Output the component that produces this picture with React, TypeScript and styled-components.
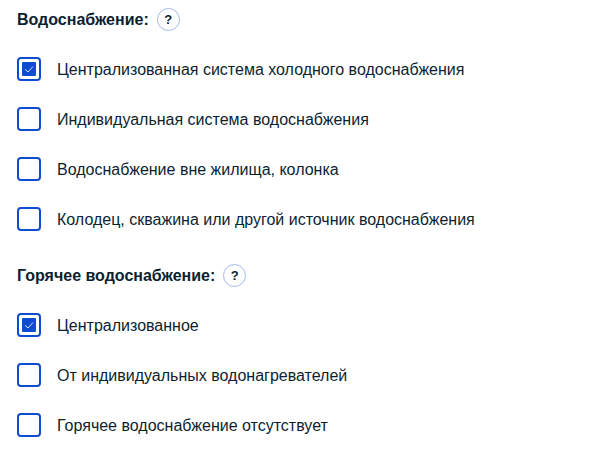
import React from "react";
import styled, { createGlobalStyle } from "styled-components";

const GlobalStyle = createGlobalStyle`
  * { box-sizing: border-box; }
  body {
    margin: 0;
    background: #fff;
    color: #0b1f33;
    font: 16px/24px "Liberation Sans", Arial, sans-serif;
  }
`;

const Form = styled.form`
  display: flex;
  flex-direction: column;
  gap: 32px;
  padding: 8px 16px 20px 17px;
`;

const Group = styled.section`
  display: flex;
  flex-direction: column;
  gap: 24px;
`;

const Header = styled.header`
  display: flex;
  align-items: flex-start;
  gap: 8px;
`;

const Title = styled.h2`
  margin: 0;
  font-size: 16px;
  line-height: 24px;
  font-weight: 700;
`;

const HelpButton = styled.button`
  display: flex;
  align-items: center;
  justify-content: center;
  width: 23px;
  height: 23px;
  padding: 0;
  border: 1px solid #a3b9f0;
  border-radius: 50%;
  background: #fff;
  color: #0b1f33;
  font: 700 13px/16px "Liberation Sans", Arial, sans-serif;
`;

const Options = styled.div`
  display: flex;
  flex-direction: column;
  gap: 24px;
`;

const Option = styled.label`
  display: flex;
  align-items: center;
  gap: 16px;
`;

const OptionText = styled.span`
  padding-top: 2px;
  line-height: 24px;
`;

const Box = styled.span`
  display: grid;
  flex: none;
  width: 24px;
  height: 24px;
  place-items: center;

  > * { grid-area: 1 / 1; }
`;

const Check = styled.input`
  appearance: none;
  width: 24px;
  height: 24px;
  margin: 0;
  border: 2px solid #0d4cd3;
  border-radius: 4px;
  background: #fff;

  & + svg { visibility: hidden; pointer-events: none; }
  &:checked + svg { visibility: visible; }
`;

const groups = [
  {
    title: "Водоснабжение:",
    options: [
      { label: "Централизованная система холодного водоснабжения", checked: true },
      { label: "Индивидуальная система водоснабжения" },
      { label: "Водоснабжение вне жилища, колонка" },
      { label: "Колодец, скважина или другой источник водоснабжения" },
    ],
  },
  {
    title: "Горячее водоснабжение:",
    options: [
      { label: "Централизованное", checked: true },
      { label: "От индивидуальных водонагревателей" },
      { label: "Горячее водоснабжение отсутствует" },
    ],
  },
];

export default function App() {
  return (
    <>
      <GlobalStyle />
      <Form>
        {groups.map((group) => (
          <Group key={group.title}>
            <Header>
              <Title>{group.title}</Title>
              <HelpButton type="button">?</HelpButton>
            </Header>
            <Options>
              {group.options.map((option) => (
                <Option key={option.label}>
                  <Box>
                    <Check type="checkbox" defaultChecked={option.checked} />
                    <svg width="14" height="14" viewBox="0 0 14 14" aria-hidden="true">
                      <rect width="14" height="14" rx="1" fill="#0d4cd3" />
                      <path d="M3 7.2l3 2.8 5-5.5" fill="none" stroke="#d5e0fa" />
                    </svg>
                  </Box>
                  <OptionText>{option.label}</OptionText>
                </Option>
              ))}
            </Options>
          </Group>
        ))}
      </Form>
    </>
  );
}
